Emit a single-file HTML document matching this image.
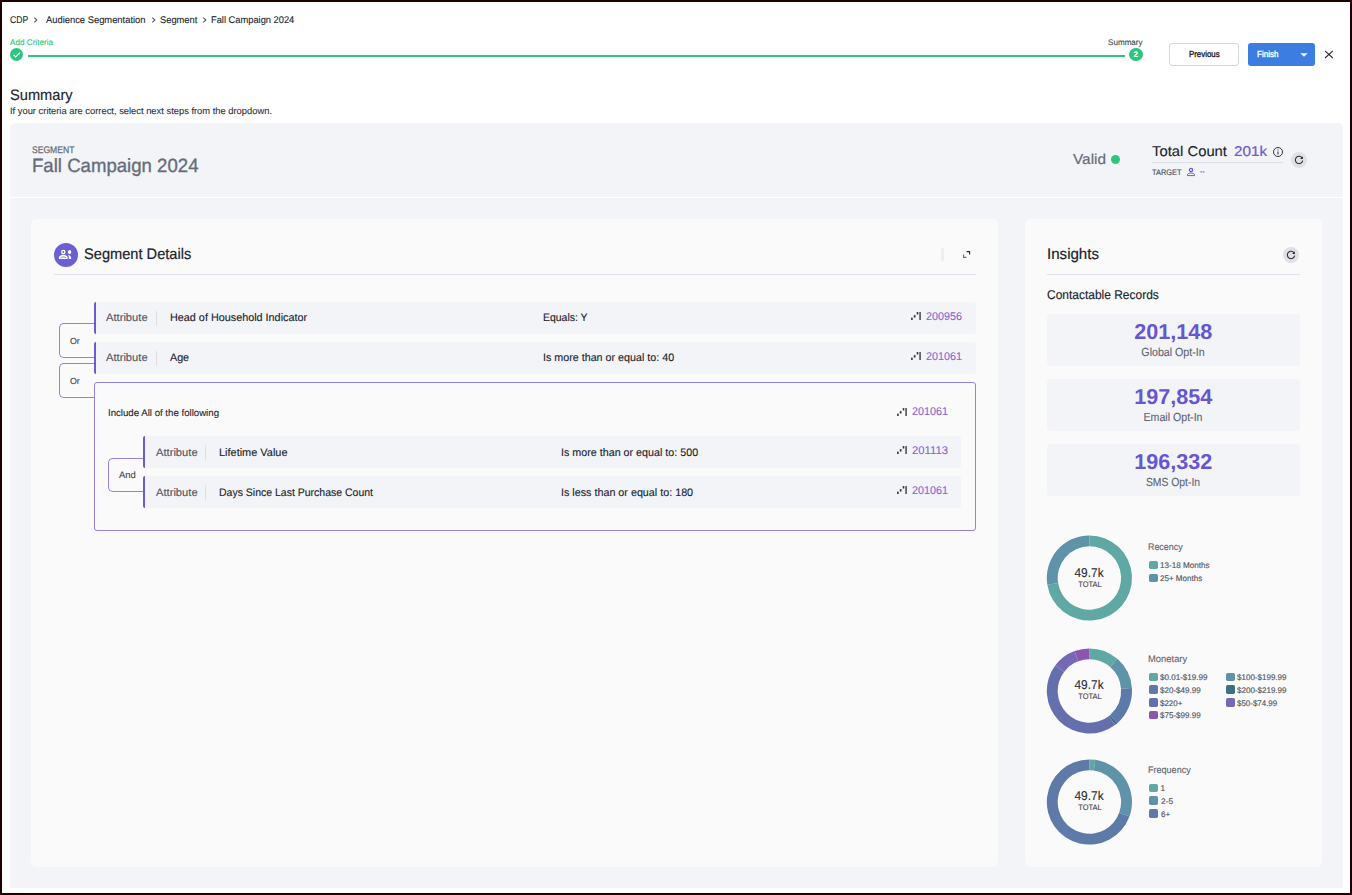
<!DOCTYPE html><html lang="en"><head><meta charset="utf-8"><title>Summary - Fall Campaign 2024</title><style>
*{box-sizing:border-box;margin:0;padding:0}
html,body{width:1352px;height:895px;overflow:hidden;background:#fff}
body{font-family:"Liberation Sans",sans-serif;position:relative;color:#20232c}
.t{position:absolute;white-space:nowrap;line-height:1;text-rendering:geometricPrecision}
.a{position:absolute}
#frame{position:absolute;left:0;top:0;width:1352px;height:895px;border:2px solid #200000;z-index:50;pointer-events:none}
</style></head><body>
<div id="frame"></div>
<span class="t" style="font-size:9.7px;top:16.01px;left:10px;color:#20232c;-webkit-text-stroke:0.1px #20232c;transform-origin:0 50%;transform:scaleX(0.8892);">CDP</span>
<span class="t" style="font-size:9.7px;top:16.01px;left:46px;color:#20232c;-webkit-text-stroke:0.1px #20232c;transform-origin:0 50%;transform:scaleX(0.9672);">Audience Segmentation</span>
<span class="t" style="font-size:9.7px;top:16.01px;left:160px;color:#20232c;-webkit-text-stroke:0.1px #20232c;transform-origin:0 50%;transform:scaleX(0.9618);">Segment</span>
<span class="t" style="font-size:9.7px;top:16.01px;left:211px;color:#20232c;-webkit-text-stroke:0.1px #20232c;transform-origin:0 50%;transform:scaleX(0.9607);">Fall Campaign 2024</span>
<svg class="a" style="left:33px;top:15.7px" width="6" height="8" viewBox="0 0 6 8"><path d="M1.3 1.6 L3.9 4 L1.3 6.4" fill="none" stroke="#4d525e" stroke-width="1.05"/></svg>
<svg class="a" style="left:150.5px;top:15.7px" width="6" height="8" viewBox="0 0 6 8"><path d="M1.3 1.6 L3.9 4 L1.3 6.4" fill="none" stroke="#4d525e" stroke-width="1.05"/></svg>
<svg class="a" style="left:201.5px;top:15.7px" width="6" height="8" viewBox="0 0 6 8"><path d="M1.3 1.6 L3.9 4 L1.3 6.4" fill="none" stroke="#4d525e" stroke-width="1.05"/></svg>
<span class="t" style="font-size:8.2px;top:39.01px;left:10px;color:#2cc67e;-webkit-text-stroke:0.1px #2cc67e;transform-origin:0 50%;transform:scaleX(0.9946);">Add Criteria</span>
<div class="a" style="left:10px;top:47.8px;width:13.2px;height:13.2px;border-radius:50%;background:#2cc67e"></div>
<svg class="a" style="left:10px;top:47.8px" width="13.2" height="13.2" viewBox="0 0 13.2 13.2"><path d="M3.5 6.9 L5.6 9 L9.9 4.6" fill="none" stroke="#fff" stroke-width="1.2"/></svg>
<div class="a" style="left:28px;top:54.8px;width:1096.5px;height:1.9px;background:#2cc67e"></div>
<span class="t" style="font-size:8.2px;top:39.01px;left:1108.3px;color:#3a3f4b;-webkit-text-stroke:0.1px #3a3f4b;transform-origin:0 50%;transform:scaleX(0.9877);">Summary</span>
<div class="a" style="left:1129.2px;top:47.7px;width:13.4px;height:13.4px;border-radius:50%;background:#2cc67e"></div>
<span class="t" style="font-size:8.2px;top:51.41px;left:1135.9px;color:#fff;font-weight:700;transform:translateX(-50%);">2</span>
<div class="a" style="left:1169px;top:42.5px;width:70px;height:23.5px;border:1px solid #d3d6df;border-radius:3px;background:#fff"></div>
<span class="t" style="font-size:8.8px;top:50.00px;left:1188.8px;color:#1c1c28;-webkit-text-stroke:0.35px #1c1c28;transform-origin:0 50%;transform:scaleX(0.8938);">Previous</span>
<div class="a" style="left:1248px;top:42.5px;width:67px;height:23.5px;border-radius:3px;background:#3b7de0"></div>
<span class="t" style="font-size:8.8px;top:50.00px;left:1257.2px;color:#fff;-webkit-text-stroke:0.35px #fff;transform-origin:0 50%;transform:scaleX(0.9119);">Finish</span>
<svg class="a" style="left:1299.5px;top:52.8px" width="8" height="4" viewBox="0 0 8 4"><path d="M0.4 0.2 L7.6 0.2 L4 3.8 Z" fill="#fff"/></svg>
<svg class="a" style="left:1324px;top:50px" width="10" height="9" viewBox="0 0 10 9"><path d="M1 0.8 L8.8 8 M8.8 0.8 L1 8" fill="none" stroke="#2a2d36" stroke-width="1.15"/></svg>
<span class="t" style="font-size:15.2px;top:88.01px;left:10px;color:#20232c;-webkit-text-stroke:0.15px #20232c;transform-origin:0 50%;transform:scaleX(0.9633);">Summary</span>
<span class="t" style="font-size:9.4px;top:106.01px;left:10px;color:#2c303a;-webkit-text-stroke:0.1px #2c303a;transform-origin:0 50%;transform:scaleX(0.9976);">If your criteria are correct, select next steps from the dropdown.</span>
<div class="a" style="left:10px;top:123px;width:1333px;height:765px;background:#f3f4f8;border-radius:5px 5px 0 0"></div>
<div class="a" style="left:10px;top:196.6px;width:1333px;height:1.3px;background:#fff"></div>
<span class="t" style="font-size:9.6px;top:146.01px;left:32px;color:#656d79;-webkit-text-stroke:0.25px #656d79;transform-origin:0 50%;transform:scaleX(0.8935);">SEGMENT</span>
<span class="t" style="font-size:19.2px;top:157.00px;left:32px;color:#656d79;-webkit-text-stroke:0.35px #656d79;transform-origin:0 50%;transform:scaleX(0.9695);">Fall Campaign 2024</span>
<span class="t" style="font-size:14.5px;top:153.01px;left:1072.7px;color:#656d79;-webkit-text-stroke:0.2px #656d79;transform-origin:0 50%;transform:scaleX(1.0586);">Valid</span>
<div class="a" style="left:1110.8px;top:154.9px;width:9.4px;height:9.4px;border-radius:50%;background:#2cc67e"></div>
<span class="t" style="font-size:14.2px;top:145.01px;left:1152px;color:#20232c;-webkit-text-stroke:0.12px #20232c;transform-origin:0 50%;transform:scaleX(1.0448);">Total Count</span>
<span class="t" style="font-size:14.2px;top:145.01px;left:1234px;color:#6a5bd1;-webkit-text-stroke:0.2px #6a5bd1;transform-origin:0 50%;transform:scaleX(1.0726);">201k</span>
<svg class="a" style="left:1272px;top:145.7px" width="12" height="12" viewBox="0 0 12 12"><circle cx="6" cy="6" r="4.5" fill="none" stroke="#30333c" stroke-width="1"/><path d="M6 5.4 V8.4 M6 3.5 V4.5" stroke="#30333c" stroke-width="1.05" fill="none"/></svg>
<div class="a" style="left:1152px;top:162px;width:131px;height:1px;background:#dcdee6"></div>
<span class="t" style="font-size:8px;top:169.01px;left:1152px;color:#4a4f5c;-webkit-text-stroke:0.15px #4a4f5c;transform-origin:0 50%;transform:scaleX(0.9259);">TARGET</span>
<svg class="a" style="left:1186px;top:166.5px" width="10" height="10" viewBox="0 0 10 10"><circle cx="5" cy="3" r="1.6" fill="none" stroke="#6a5bd1" stroke-width="1.3"/><path d="M1.4 8.6 V7.9 C1.4 6.6 3.6 6 5 6 C6.4 6 8.6 6.6 8.6 7.9 V8.6 Z" fill="none" stroke="#6a5bd1" stroke-width="1"/></svg>
<span class="t" style="font-size:8px;top:168.01px;left:1199.6px;color:#6a5bd1;font-weight:700;transform-origin:0 50%;transform:scaleX(0.8633);">--</span>
<div class="a" style="left:1290.8px;top:152px;width:16px;height:16px;border-radius:50%;background:#dfe1e7"></div><svg class="a" style="left:1292.8px;top:154px" width="12" height="12" viewBox="0 0 12 12"><path d="M9.3 4.2 A3.7 3.7 0 1 0 9.7 6.6" fill="none" stroke="#2b2e37" stroke-width="1.05"/><path d="M9.9 2.2 V5 H7.1 Z" fill="#2b2e37"/></svg>
<div class="a" style="left:31px;top:219px;width:967px;height:647.6px;background:#fafafa;border-radius:5px"></div>
<div class="a" style="left:1025px;top:219px;width:297px;height:647.6px;background:#fafafa;border-radius:5px"></div>
<div class="a" style="left:53.9px;top:242.9px;width:24.1px;height:24.1px;border-radius:50%;background:#6b5fd4"></div>
<svg class="a" style="left:53px;top:242px" width="26" height="26" viewBox="53 242 26 26"><circle cx="63.3" cy="252" r="1.6" fill="none" stroke="#fff" stroke-width="1.35"/><path d="M58.9 259 V257.7 C58.9 255.7 61.5 254.8 63.3 254.8 C65.1 254.8 67.7 255.7 67.7 257.7 V259 Z" fill="#fff"/><path d="M60.5 257.9 C61.3 256.6 65.3 256.6 66.1 257.9" fill="none" stroke="#6b5fd4" stroke-width="0.75"/><path d="M67.6 250.2 A1.9 1.9 0 0 1 67.6 253.8 A2.6 2.6 0 0 0 67.6 250.2 Z M69.2 250 A2 2 0 0 1 69.2 254 Z" fill="#fff"/><circle cx="69.6" cy="252" r="1.7" fill="#fff"/><path d="M68.2 254.9 C69.8 255.2 71.1 256.2 71.1 257.7 V259 H68.9 V257.6 C68.9 256.5 68.6 255.6 68.2 254.9 Z" fill="#fff"/></svg>
<span class="t" style="font-size:15.3px;top:247.00px;left:84.3px;color:#20232c;-webkit-text-stroke:0.2px #20232c;transform-origin:0 50%;transform:scaleX(0.9560);">Segment Details</span>
<div class="a" style="left:54px;top:273.6px;width:922px;height:1px;background:#dfe1e8"></div>
<div class="a" style="left:941.2px;top:248px;width:2.7px;height:13px;background:#eceef3;border-radius:1.3px"></div>
<svg class="a" style="left:962px;top:250px" width="9" height="9" viewBox="962 250 9 9"><path d="M966.6 251.6 H969.6 V254.4" fill="none" stroke="#23252e" stroke-width="1.1"/><path d="M963.6 254.6 V257.4 H966.4" fill="none" stroke="#6f6a78" stroke-width="1.1"/></svg>
<div class="a" style="left:94px;top:302px;width:882px;height:32px;background:#f3f4f8;border-radius:3px"></div><div class="a" style="left:93.6px;top:302px;width:2.4px;height:32px;background:#6a5cd4;border-radius:2px 0 0 2px"></div><span class="t" style="font-size:10.9px;top:313.01px;left:106.1px;color:#4f5562;-webkit-text-stroke:0.12px #4f5562;transform-origin:0 50%;transform:scaleX(1.0256);">Attribute</span><div class="a" style="left:155.6px;top:310.5px;width:1px;height:15px;background:#dddfe6"></div><span class="t" style="font-size:10.9px;top:313.01px;left:169.9px;color:#20232c;-webkit-text-stroke:0.12px #20232c;transform-origin:0 50%;transform:scaleX(0.9931);">Head of Household Indicator</span><span class="t" style="font-size:10.9px;top:313.01px;left:543px;color:#20232c;-webkit-text-stroke:0.12px #20232c;transform-origin:0 50%;transform:scaleX(0.9608);">Equals: Y</span><svg class="a" style="left:910.6px;top:312.2px" width="11" height="9" viewBox="0 0 11 9"><rect x="0.1" y="5.6" width="1.6" height="2.4" fill="#35323c"/><rect x="2.8" y="3.1" width="1.7" height="2.4" fill="#35323c"/><rect x="5.7" y="0.1" width="1.6" height="2.4" fill="#35323c"/><rect x="8.4" y="0" width="1.35" height="8" fill="#35323c"/></svg><span class="t" style="font-size:11.2px;top:312.00px;left:962px;color:#8867d3;-webkit-text-stroke:0.12px #8867d3;transform-origin:100% 50%;transform:translateX(-100%) scaleX(0.9640);">200956</span>
<div class="a" style="left:94px;top:342px;width:882px;height:32px;background:#f3f4f8;border-radius:3px"></div><div class="a" style="left:93.6px;top:342px;width:2.4px;height:32px;background:#6a5cd4;border-radius:2px 0 0 2px"></div><span class="t" style="font-size:10.9px;top:353.01px;left:106.1px;color:#4f5562;-webkit-text-stroke:0.12px #4f5562;transform-origin:0 50%;transform:scaleX(1.0256);">Attribute</span><div class="a" style="left:155.6px;top:350.5px;width:1px;height:15px;background:#dddfe6"></div><span class="t" style="font-size:10.9px;top:353.01px;left:169.9px;color:#20232c;-webkit-text-stroke:0.12px #20232c;transform-origin:0 50%;transform:scaleX(0.9850);">Age</span><span class="t" style="font-size:10.9px;top:353.01px;left:543px;color:#20232c;-webkit-text-stroke:0.12px #20232c;transform-origin:0 50%;transform:scaleX(0.9843);">Is more than or equal to: 40</span><svg class="a" style="left:910.6px;top:352.2px" width="11" height="9" viewBox="0 0 11 9"><rect x="0.1" y="5.6" width="1.6" height="2.4" fill="#35323c"/><rect x="2.8" y="3.1" width="1.7" height="2.4" fill="#35323c"/><rect x="5.7" y="0.1" width="1.6" height="2.4" fill="#35323c"/><rect x="8.4" y="0" width="1.35" height="8" fill="#35323c"/></svg><span class="t" style="font-size:11.2px;top:352.00px;left:962px;color:#8867d3;-webkit-text-stroke:0.12px #8867d3;transform-origin:100% 50%;transform:translateX(-100%) scaleX(0.9640);">201061</span>
<div class="a" style="left:94px;top:382px;width:882px;height:149px;border:1px solid #8d84dd;border-radius:3px;background:#fafafa"></div>
<span class="t" style="font-size:9.6px;top:409.01px;left:108px;color:#20232c;-webkit-text-stroke:0.1px #20232c;transform-origin:0 50%;transform:scaleX(1.0054);">Include All of the following</span>
<svg class="a" style="left:896.9px;top:408.2px" width="11" height="9" viewBox="0 0 11 9"><rect x="0.1" y="5.6" width="1.6" height="2.4" fill="#35323c"/><rect x="2.8" y="3.1" width="1.7" height="2.4" fill="#35323c"/><rect x="5.7" y="0.1" width="1.6" height="2.4" fill="#35323c"/><rect x="8.4" y="0" width="1.35" height="8" fill="#35323c"/></svg>
<span class="t" style="font-size:11.2px;top:407.00px;left:947.5px;color:#8867d3;-webkit-text-stroke:0.12px #8867d3;transform-origin:100% 50%;transform:translateX(-100%) scaleX(0.9640);">201061</span>
<div class="a" style="left:143px;top:436px;width:818px;height:32px;background:#f3f4f8;border-radius:3px"></div><div class="a" style="left:142.6px;top:436px;width:2.4px;height:32px;background:#6a5cd4;border-radius:2px 0 0 2px"></div><span class="t" style="font-size:10.9px;top:448.01px;left:155.5px;color:#4f5562;-webkit-text-stroke:0.12px #4f5562;transform-origin:0 50%;transform:scaleX(1.0256);">Attribute</span><div class="a" style="left:204.6px;top:444.5px;width:1px;height:15px;background:#dddfe6"></div><span class="t" style="font-size:10.9px;top:448.01px;left:219.3px;color:#20232c;-webkit-text-stroke:0.12px #20232c;transform-origin:0 50%;transform:scaleX(1.0041);">Lifetime Value</span><span class="t" style="font-size:10.9px;top:448.01px;left:560.6px;color:#20232c;-webkit-text-stroke:0.12px #20232c;transform-origin:0 50%;transform:scaleX(0.9846);">Is more than or equal to: 500</span><svg class="a" style="left:896.7px;top:446.2px" width="11" height="9" viewBox="0 0 11 9"><rect x="0.1" y="5.6" width="1.6" height="2.4" fill="#35323c"/><rect x="2.8" y="3.1" width="1.7" height="2.4" fill="#35323c"/><rect x="5.7" y="0.1" width="1.6" height="2.4" fill="#35323c"/><rect x="8.4" y="0" width="1.35" height="8" fill="#35323c"/></svg><span class="t" style="font-size:11.2px;top:446.00px;left:947.5px;color:#8867d3;-webkit-text-stroke:0.12px #8867d3;transform-origin:100% 50%;transform:translateX(-100%) scaleX(1.0092);">201113</span>
<div class="a" style="left:143px;top:476px;width:818px;height:32px;background:#f3f4f8;border-radius:3px"></div><div class="a" style="left:142.6px;top:476px;width:2.4px;height:32px;background:#6a5cd4;border-radius:2px 0 0 2px"></div><span class="t" style="font-size:10.9px;top:488.01px;left:155.5px;color:#4f5562;-webkit-text-stroke:0.12px #4f5562;transform-origin:0 50%;transform:scaleX(1.0256);">Attribute</span><div class="a" style="left:204.6px;top:484.5px;width:1px;height:15px;background:#dddfe6"></div><span class="t" style="font-size:10.9px;top:488.01px;left:219.3px;color:#20232c;-webkit-text-stroke:0.12px #20232c;transform-origin:0 50%;transform:scaleX(0.9635);">Days Since Last Purchase Count</span><span class="t" style="font-size:10.9px;top:488.01px;left:560.6px;color:#20232c;-webkit-text-stroke:0.12px #20232c;transform-origin:0 50%;transform:scaleX(0.9872);">Is less than or equal to: 180</span><svg class="a" style="left:896.7px;top:486.2px" width="11" height="9" viewBox="0 0 11 9"><rect x="0.1" y="5.6" width="1.6" height="2.4" fill="#35323c"/><rect x="2.8" y="3.1" width="1.7" height="2.4" fill="#35323c"/><rect x="5.7" y="0.1" width="1.6" height="2.4" fill="#35323c"/><rect x="8.4" y="0" width="1.35" height="8" fill="#35323c"/></svg><span class="t" style="font-size:11.2px;top:486.00px;left:947.5px;color:#8867d3;-webkit-text-stroke:0.12px #8867d3;transform-origin:100% 50%;transform:translateX(-100%) scaleX(0.9640);">201061</span>
<div class="a" style="left:59px;top:323px;width:35px;height:34.5px;border:1px solid #8d84dd;border-right:none;border-radius:5px 0 0 5px"></div><span class="t" style="font-size:8.9px;top:336.85px;left:69.5px;color:#3a3f4b;-webkit-text-stroke:0.1px #3a3f4b;transform-origin:0 50%;transform:scaleX(0.9940);">Or</span>
<div class="a" style="left:59px;top:363px;width:35px;height:34.5px;border:1px solid #8d84dd;border-right:none;border-radius:5px 0 0 5px"></div><span class="t" style="font-size:8.9px;top:376.85px;left:69.5px;color:#3a3f4b;-webkit-text-stroke:0.1px #3a3f4b;transform-origin:0 50%;transform:scaleX(0.9940);">Or</span>
<div class="a" style="left:108px;top:458px;width:35px;height:34px;border:1px solid #8d84dd;border-right:none;border-radius:5px 0 0 5px"></div><span class="t" style="font-size:9.4px;top:469.91px;left:118.8px;color:#3a3f4b;-webkit-text-stroke:0.1px #3a3f4b;transform-origin:0 50%;transform:scaleX(1.0067);">And</span>
<span class="t" style="font-size:15.3px;top:247.00px;left:1047px;color:#20232c;-webkit-text-stroke:0.2px #20232c;transform-origin:0 50%;transform:scaleX(0.9864);">Insights</span>
<div class="a" style="left:1283px;top:247px;width:16px;height:16px;border-radius:50%;background:#dfe1e7"></div><svg class="a" style="left:1285px;top:249px" width="12" height="12" viewBox="0 0 12 12"><path d="M9.3 4.2 A3.7 3.7 0 1 0 9.7 6.6" fill="none" stroke="#2b2e37" stroke-width="1.05"/><path d="M9.9 2.2 V5 H7.1 Z" fill="#2b2e37"/></svg>
<div class="a" style="left:1047px;top:273.6px;width:253px;height:1px;background:#dfe1e8"></div>
<span class="t" style="font-size:12.7px;top:289.00px;left:1047.2px;color:#20232c;-webkit-text-stroke:0.15px #20232c;transform-origin:0 50%;transform:scaleX(0.9436);">Contactable Records</span>
<div class="a" style="left:1047px;top:314.2px;width:253px;height:51.5px;background:#f3f4f8;border-radius:4px"></div><span class="t" style="font-size:21.6px;top:321.41px;left:1173.3px;color:#6656d2;font-weight:700;transform:translateX(-50%);">201,148</span><span class="t" style="font-size:11.7px;top:346.81px;left:1173.4px;color:#5e6573;-webkit-text-stroke:0.12px #5e6573;transform:translateX(-50%) scaleX(0.9106);">Global Opt-In</span>
<div class="a" style="left:1047px;top:379.2px;width:253px;height:51.5px;background:#f3f4f8;border-radius:4px"></div><span class="t" style="font-size:21.6px;top:386.41px;left:1173.3px;color:#6656d2;font-weight:700;transform:translateX(-50%);">197,854</span><span class="t" style="font-size:11.7px;top:411.81px;left:1173.4px;color:#5e6573;-webkit-text-stroke:0.12px #5e6573;transform:translateX(-50%) scaleX(0.9083);">Email Opt-In</span>
<div class="a" style="left:1047px;top:444.2px;width:253px;height:51.5px;background:#f3f4f8;border-radius:4px"></div><span class="t" style="font-size:21.6px;top:451.41px;left:1173.3px;color:#6656d2;font-weight:700;transform:translateX(-50%);">196,332</span><span class="t" style="font-size:11.7px;top:476.81px;left:1173.4px;color:#5e6573;-webkit-text-stroke:0.12px #5e6573;transform:translateX(-50%) scaleX(0.8876);">SMS Opt-In</span>
<svg class="a" style="left:1040px;top:528.4px" width="100" height="100" viewBox="1040 528.4 100 100"><path d="M1089.40 535.80 A42.6 42.6 0 1 1 1047.32 585.06 L1058.09 583.36 A31.7 31.7 0 1 0 1089.40 546.70 Z" fill="#5fa8a3"/><path d="M1047.32 585.06 A42.6 42.6 0 0 1 1089.40 535.80 L1089.40 546.70 A31.7 31.7 0 0 0 1058.09 583.36 Z" fill="#5e93a9"/></svg><span class="t" style="font-size:12.8px;top:566.61px;left:1089.4px;color:#2a2d36;-webkit-text-stroke:0.1px #2a2d36;transform:translateX(-50%) scaleX(0.9325);">49.7k</span><span class="t" style="font-size:8px;top:581.01px;left:1089.6px;color:#3c404a;-webkit-text-stroke:0.1px #3c404a;transform:translateX(-50%) scaleX(0.9342);">TOTAL</span>
<span class="t" style="font-size:9.6px;top:543.01px;left:1148.3px;color:#5f6771;-webkit-text-stroke:0.12px #5f6771;transform-origin:0 50%;transform:scaleX(0.9269);">Recency</span>
<div class="a" style="left:1149px;top:560.8px;width:8.7px;height:8.6px;background:#5fa8a3;border-radius:1.8px"></div><span class="t" style="font-size:8.2px;top:562.30px;left:1160.4px;color:#50565f;-webkit-text-stroke:0.15px #50565f;transform-origin:0 50%;transform:scaleX(0.9885);">13-18 Months</span>
<div class="a" style="left:1149px;top:573.6px;width:8.7px;height:8.6px;background:#5e93a9;border-radius:1.8px"></div><span class="t" style="font-size:8.2px;top:575.10px;left:1160.4px;color:#50565f;-webkit-text-stroke:0.15px #50565f;transform-origin:0 50%;transform:scaleX(0.9810);">25+ Months</span>
<svg class="a" style="left:1040px;top:640.5px" width="100" height="100" viewBox="1040 640.5 100 100"><path d="M1089.40 647.90 A42.6 42.6 0 0 1 1117.35 658.35 L1110.20 666.58 A31.7 31.7 0 0 0 1089.40 658.80 Z" fill="#5fa8a3"/><path d="M1117.35 658.35 A42.6 42.6 0 0 1 1131.90 687.53 L1121.02 688.29 A31.7 31.7 0 0 0 1110.20 666.58 Z" fill="#5e93a9"/><path d="M1131.90 687.53 A42.6 42.6 0 0 1 1117.35 722.65 L1110.20 714.42 A31.7 31.7 0 0 0 1121.02 688.29 Z" fill="#5e7aa8"/><path d="M1117.35 722.65 A42.6 42.6 0 0 1 1115.33 724.30 L1108.70 715.65 A31.7 31.7 0 0 0 1110.20 714.42 Z" fill="#3d6f86"/><path d="M1115.33 724.30 A42.6 42.6 0 0 1 1055.38 664.86 L1064.08 671.42 A31.7 31.7 0 0 0 1108.70 715.65 Z" fill="#6470ae"/><path d="M1055.38 664.86 A42.6 42.6 0 0 1 1074.48 650.60 L1078.30 660.81 A31.7 31.7 0 0 0 1064.08 671.42 Z" fill="#7568b7"/><path d="M1074.48 650.60 A42.6 42.6 0 0 1 1089.40 647.90 L1089.40 658.80 A31.7 31.7 0 0 0 1078.30 660.81 Z" fill="#8e55b0"/></svg><span class="t" style="font-size:12.8px;top:678.71px;left:1089.4px;color:#2a2d36;-webkit-text-stroke:0.1px #2a2d36;transform:translateX(-50%) scaleX(0.9325);">49.7k</span><span class="t" style="font-size:8px;top:693.10px;left:1089.6px;color:#3c404a;-webkit-text-stroke:0.1px #3c404a;transform:translateX(-50%) scaleX(0.9342);">TOTAL</span>
<span class="t" style="font-size:9.6px;top:655.01px;left:1148.3px;color:#5f6771;-webkit-text-stroke:0.12px #5f6771;transform-origin:0 50%;transform:scaleX(0.9800);">Monetary</span>
<div class="a" style="left:1149px;top:672.6px;width:8.7px;height:8.6px;background:#5fa8a3;border-radius:1.8px"></div><span class="t" style="font-size:8.2px;top:674.10px;left:1160.4px;color:#50565f;-webkit-text-stroke:0.15px #50565f;transform-origin:0 50%;transform:scaleX(0.9841);">$0.01-$19.99</span>
<div class="a" style="left:1149px;top:685.4px;width:8.7px;height:8.6px;background:#5e7aa8;border-radius:1.8px"></div><span class="t" style="font-size:8.2px;top:686.91px;left:1160.4px;color:#50565f;-webkit-text-stroke:0.15px #50565f;transform-origin:0 50%;transform:scaleX(0.9822);">$20-$49.99</span>
<div class="a" style="left:1149px;top:698.2px;width:8.7px;height:8.6px;background:#6470ae;border-radius:1.8px"></div><span class="t" style="font-size:8.2px;top:699.71px;left:1160.4px;color:#50565f;-webkit-text-stroke:0.15px #50565f;transform-origin:0 50%;transform:scaleX(0.9696);">$220+</span>
<div class="a" style="left:1149px;top:710.8px;width:8.7px;height:8.6px;background:#8e55b0;border-radius:1.8px"></div><span class="t" style="font-size:8.2px;top:712.30px;left:1160.4px;color:#50565f;-webkit-text-stroke:0.15px #50565f;transform-origin:0 50%;transform:scaleX(0.9822);">$75-$99.99</span>
<div class="a" style="left:1226px;top:672.6px;width:8.7px;height:8.6px;background:#5e93a9;border-radius:1.8px"></div><span class="t" style="font-size:8.2px;top:674.10px;left:1237.4px;color:#50565f;-webkit-text-stroke:0.15px #50565f;transform-origin:0 50%;transform:scaleX(0.9793);">$100-$199.99</span>
<div class="a" style="left:1226px;top:685.4px;width:8.7px;height:8.6px;background:#3d6f86;border-radius:1.8px"></div><span class="t" style="font-size:8.2px;top:686.91px;left:1237.4px;color:#50565f;-webkit-text-stroke:0.15px #50565f;transform-origin:0 50%;transform:scaleX(0.9793);">$200-$219.99</span>
<div class="a" style="left:1226px;top:698.2px;width:8.7px;height:8.6px;background:#7568b7;border-radius:1.8px"></div><span class="t" style="font-size:8.2px;top:699.71px;left:1237.4px;color:#50565f;-webkit-text-stroke:0.15px #50565f;transform-origin:0 50%;transform:scaleX(0.9701);">$50-$74.99</span>
<svg class="a" style="left:1040px;top:751.6px" width="100" height="100" viewBox="1040 751.6 100 100"><path d="M1089.40 759.00 A42.6 42.6 0 0 1 1095.33 759.41 L1093.81 770.21 A31.7 31.7 0 0 0 1089.40 769.90 Z" fill="#5fa8a3"/><path d="M1095.33 759.41 A42.6 42.6 0 0 1 1129.43 816.17 L1119.19 812.44 A31.7 31.7 0 0 0 1093.81 770.21 Z" fill="#5e93a9"/><path d="M1129.43 816.17 A42.6 42.6 0 1 1 1089.40 759.00 L1089.40 769.90 A31.7 31.7 0 1 0 1119.19 812.44 Z" fill="#5e7aa8"/></svg><span class="t" style="font-size:12.8px;top:789.81px;left:1089.4px;color:#2a2d36;-webkit-text-stroke:0.1px #2a2d36;transform:translateX(-50%) scaleX(0.9325);">49.7k</span><span class="t" style="font-size:8px;top:804.21px;left:1089.6px;color:#3c404a;-webkit-text-stroke:0.1px #3c404a;transform:translateX(-50%) scaleX(0.9342);">TOTAL</span>
<span class="t" style="font-size:9.6px;top:766.21px;left:1148.3px;color:#5f6771;-webkit-text-stroke:0.12px #5f6771;transform-origin:0 50%;transform:scaleX(0.9420);">Frequency</span>
<div class="a" style="left:1149px;top:783.5px;width:8.7px;height:8.6px;background:#5fa8a3;border-radius:1.8px"></div><span class="t" style="font-size:8.2px;top:785.01px;left:1160.6px;color:#50565f;-webkit-text-stroke:0.15px #50565f;">1</span>
<div class="a" style="left:1149px;top:796.2px;width:8.7px;height:8.6px;background:#5e93a9;border-radius:1.8px"></div><span class="t" style="font-size:8.2px;top:797.71px;left:1160.6px;color:#50565f;-webkit-text-stroke:0.15px #50565f;transform-origin:0 50%;transform:scaleX(1.0216);">2-5</span>
<div class="a" style="left:1149px;top:809.3px;width:8.7px;height:8.6px;background:#5e7aa8;border-radius:1.8px"></div><span class="t" style="font-size:8.2px;top:810.80px;left:1160.6px;color:#50565f;-webkit-text-stroke:0.15px #50565f;transform-origin:0 50%;transform:scaleX(0.9953);">6+</span>
</body></html>
